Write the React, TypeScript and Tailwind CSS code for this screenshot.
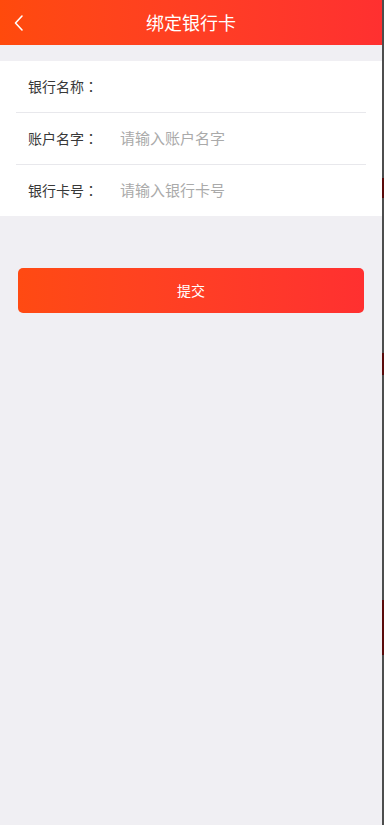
const font = { fontFamily: '"Noto Sans CJK SC", "Noto Sans", sans-serif' };

function Row({ label, placeholder, last }: { label: string; placeholder?: string; last?: boolean }) {
  return (
    <div className={`mx-4 flex items-center ${last ? "h-[51px]" : "h-[52px] border-b border-[#e8e8ec]"}`}>
      <span className="w-[104px] pl-3 text-[14px] text-[#383838]">
        {label}
        <span style={{ fontFamily: '"Noto Sans CJK TC", sans-serif' }}>：</span>
      </span>
      {placeholder !== undefined && (
        <input
          className="min-w-0 flex-1 bg-transparent text-[15px] text-[#333] outline-none placeholder:text-[#aaa]"
          placeholder={placeholder}
        />
      )}
    </div>
  );
}

export default function App() {
  return (
    <div className="flex min-h-[825px] w-full" style={font}>
      <div className="flex-1 bg-[#f0eff3]">
        <div className="relative flex h-[45px] items-center justify-center bg-gradient-to-r from-[#ff4a0c] to-[#ff3030]">
          <svg className="absolute left-[12px] top-[14px]" width="14" height="18" viewBox="0 0 14 18" fill="none">
            <path d="M10 2 L3.5 9 L10 16" stroke="#fff" strokeWidth="1.6" strokeLinecap="round" strokeLinejoin="round" />
          </svg>
          <h1 className="text-[18px] text-white">绑定银行卡</h1>
        </div>
        <div className="mt-4 bg-white">
          <Row label="银行名称" />
          <Row label="账户名字" placeholder="请输入账户名字" />
          <Row label="银行卡号" placeholder="请输入银行卡号" last />
        </div>
        <div className="px-[18px] pt-[52px]">
          <button className="h-[45px] w-full rounded-[5px] bg-gradient-to-r from-[#ff4a12] to-[#ff3030] text-[14px] text-white">
            提交
          </button>
        </div>
      </div>
      <div className="flex w-[2px] flex-col bg-[#4d4d4d]">
        <div className="h-[178px]" />
        <div className="h-[20px] bg-[#5a0a0a]" />
        <div className="h-[155px]" />
        <div className="h-[22px] bg-[#5a0a0a]" />
        <div className="h-[225px]" />
        <div className="h-[55px] bg-[#5a0a0a]" />
      </div>
    </div>
  );
}
